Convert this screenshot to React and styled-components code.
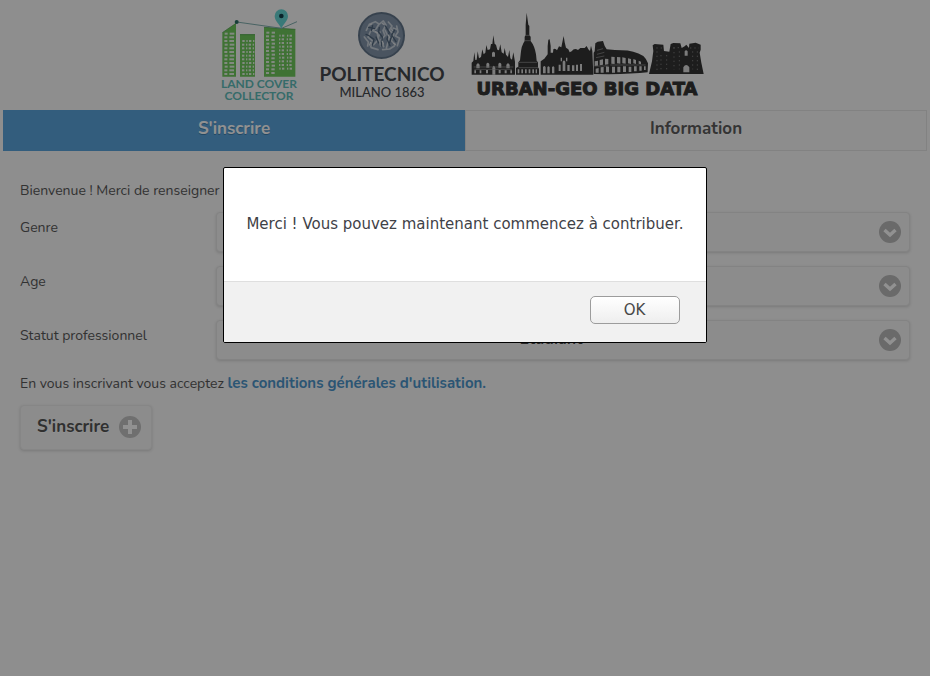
import React from "react";
import styled, { createGlobalStyle } from "styled-components";

const Global = createGlobalStyle`
  *, *::before, *::after { box-sizing: border-box; }
  body {
    margin: 0;
    min-height: 100vh;
    background: #f9f9f9;
    color: #585858;
    font: 14px/20px Nunito, "Noto Sans", sans-serif;
  }
`;

const Header = styled.header`
  display: flex;
  justify-content: center;
  gap: 12px;
  height: 110px;
`;

const Logo = styled.svg`
  display: block;
  flex: none;
  height: 110px;
`;

const Tabs = styled.nav`
  display: grid;
  grid-template-columns: 1fr 1fr;
  margin: 0 3px;
`;

const Tab = styled.button`
  height: 41px;
  padding: 0 0 3px;
  border: 1px solid ${(p) => (p.$active ? "#5aa4dc" : "#e4e4e4")};
  background: ${(p) => (p.$active ? "#5aa4dc" : "#f8f8f8")};
  color: ${(p) => (p.$active ? "#ffffff" : "#5c5c5c")};
  text-shadow: 0 1px 0 ${(p) => (p.$active ? "#3d7eae" : "#ffffff")};
  font: 700 17px/20px Nunito, "Noto Sans", sans-serif;
`;

const Form = styled.form`
  display: flex;
  flex-direction: column;
  padding: 30px 20px;
`;

const Intro = styled.p`
  margin: 0 0 11px;
`;

const Field = styled.div`
  display: grid;
  grid-template-columns: 22% 1fr;
  align-items: start;
  margin-bottom: 14px;
`;

const Label = styled.label`
  padding-top: 6px;
`;

const SelectBox = styled.div`
  display: grid;
  align-items: center;
  border: 1px solid #e6e6e6;
  border-radius: 4px;
  background: #f7f7f7;
  box-shadow: 0 1px 3px rgba(0, 0, 0, 0.14);

  & > * {
    grid-area: 1 / 1;
  }

  & > svg {
    justify-self: end;
    margin-right: 8px;
    pointer-events: none;
  }
`;

const Select = styled.select`
  width: 100%;
  height: 38px;
  padding: 0 40px 2px 16px;
  border: 0;
  appearance: none;
  background: transparent;
  color: #444444;
  font: 700 16px/20px Nunito, "Noto Sans", sans-serif;
  text-align: center;
  text-align-last: center;
`;

const Terms = styled.p`
  margin: -1px 0 11px;
`;

const TermsLink = styled.a`
  color: #4c96cc;
  font-size: 15px;
  font-weight: 700;
  text-decoration: none;
`;

const SubmitButton = styled.button`
  display: flex;
  align-items: center;
  align-self: flex-start;
  gap: 10px;
  height: 45px;
  padding: 0 10px 2px 16px;
  border: 1px solid #ececec;
  border-radius: 4px;
  background: #f6f6f6;
  color: #555555;
  box-shadow: 0 1px 3px rgba(0, 0, 0, 0.15);
  text-shadow: 0 1px 0 #ffffff;
  font: 700 17px/20px Nunito, "Noto Sans", sans-serif;
`;

const Backdrop = styled.div`
  position: fixed;
  inset: 0;
  display: flex;
  align-items: flex-start;
  justify-content: center;
  padding: 167px 16px 16px;
  background: rgba(0, 0, 0, 0.43);
`;

const Dialog = styled.section`
  overflow: hidden;
  border: 1px solid #000000;
  border-radius: 2px;
  background: #ffffff;
  color: #3f4247;
  font: 15px/20px "DejaVu Sans", sans-serif;
`;

const Message = styled.p`
  margin: 0;
  padding: 46px 22px 47px;
`;

const DialogFooter = styled.footer`
  display: flex;
  justify-content: flex-end;
  padding: 14px 26px 18px;
  border-top: 1px solid #dfdfdf;
  background: #f1f1f1;
`;

const OkButton = styled.button`
  width: 90px;
  height: 28px;
  padding: 0;
  border: 1px solid #9c9c9c;
  border-radius: 5px;
  background: linear-gradient(#ffffff, #eeeeee);
  color: #484848;
  font: 15px/20px "DejaVu Sans", sans-serif;
`;

function Windows({ columns, top, bottom, step }) {
  const rows = [];
  for (let y = top; y < bottom; y += step) rows.push(y);
  return rows.map((y, i) =>
    columns.map(([x, w]) => (
      <rect key={`${x}-${y}`} x={x + (i % 3 === 0 ? 1 : 0)} y={y} width={w} height="6" fill="#e4f2e2" />
    ))
  );
}

function LandCoverLogo() {
  return (
    <Logo width="84" viewBox="218 0 84 110" role="img" aria-label="Land Cover Collector">
      <g transform="translate(210 0) scale(.33333)">
        <path fill="#6fc95c" d="M37 98L78 70V230H37zM90 103H135V230H90zM162 82L256 88V230H162z" />
        <path stroke="#4a9a4a" strokeWidth="2" fill="none" d="M37 98L78 70M90 104H135M162 82L256 88" />
        <Windows columns={[[43, 9], [58, 14]]} top={98} bottom={222} step={11} />
        <Windows columns={[[96, 7], [108, 4], [116, 7], [128, 4]]} top={120} bottom={222} step={11} />
        <Windows columns={[[168, 9], [184, 10]]} top={95} bottom={222} step={11} />
        <Windows columns={[[207, 4], [215, 7], [230, 4], [238, 7]]} top={104} bottom={210} step={11} />
        <path fill="none" stroke="#80aeae" strokeWidth="3" d="M80 66L215 85L261 65" />
        <circle cx="80" cy="66" r="6" fill="#2c6f65" />
        <path fill="#65d5d4" d="M214 86C209 72 194 63 194 48A20 20 0 0 1 234 48C234 63 219 72 214 86z" />
        <circle cx="214" cy="48" r="7" fill="#123f4b" />
      </g>
      <g fill="#60bdba" fontFamily="Lato, sans-serif" fontWeight="700" fontSize="12" textAnchor="middle">
        <text x="259" y="88">LAND COVER</text>
        <text x="259" y="100">COLLECTOR</text>
      </g>
    </Logo>
  );
}

function PolitecnicoLogo() {
  return (
    <Logo width="140" viewBox="314 0 140 110" role="img" aria-label="Politecnico Milano 1863">
      <circle cx="381.5" cy="35.5" r="22.5" fill="#8395aa" stroke="#62758a" strokeWidth="2" />
      <g transform="translate(310 0) scale(.33333)" fill="none" strokeLinecap="round" strokeLinejoin="round">
        <path stroke="#c8d1da" strokeWidth="5" d="M169 91l9-18 18-8 11 7-8 14-17 7-8 18 14 12-6 17M189 92l13 7 3 20-14 15M207 73l13-10 8 12-9 16 6 16-12 12 8 21M235 66l11 12-8 13 14 11-8 20 12 12M260 78l4 18-8 12 13 7-7 22M163 111l12 15-2 12M184 143l20 6M218 149l21-2 14-9M210 96l-5 18 7 24M225 90l12 26-8 29M249 84l14 5" />
        <path stroke="#50657b" strokeWidth="4" d="M176 82l18 4M188 77l-4 15M180 110l12 8-5 17M208 82l-2 14 11 15-3 27M226 78l12 19-7 20 9 20M254 90l-9 15 13 20M168 103l9 4M198 111l8 18M244 111l-5 17" />
        <path stroke="#e0e4e8" strokeWidth="4" d="M180 75l5-3M218 71l4 2M245 87l2 4M197 95l5 4M182 127l-3 8M217 124l3 8M235 105l4 8M251 130l4 3" />
      </g>
      <g fill="#44474c" fontFamily="Lato, sans-serif" textAnchor="middle">
        <text x="382" y="81" fontSize="19" fontWeight="700">POLITECNICO</text>
        <text x="382" y="97" fontSize="13" fontWeight="500">MILANO 1863</text>
      </g>
    </Logo>
  );
}

function UrbanLogo() {
  return (
    <Logo width="246" viewBox="466 0 246 110" role="img" aria-label="Urban-Geo Big Data">
      <g transform="translate(460 0) scale(.33333)" fill="#343434">
        <path d="M35 224V188L40 183 43 157 46 180 50 179 53 154 57 175 63 171 67 148 71 163 76 158 79 135 83 150 90 148 93 132 97 132 100 106 104 132 108 134 112 149 117 151 121 133 125 157 131 161 134 144 138 164 144 171 148 150 151 175 156 179 160 157 165 185V224z" />
        <path d="M168 224V204L175 200V187L180 181 182 163Q184 136 194 123V110L197 106V74L200 38 205 74 208 78V106L212 110V123Q224 138 228 163L230 182 234 187V202L237 206V224z" />
        <path d="M242 224V184L253 176 263 163V138L265 119 269 118 272 138V158L279 158 280 148Q284 144 288 148L291 151 297 139 304 142 309 117 311 108 314 127 318 143 325 148 329 157 335 154Q343 142 354 150L361 144 374 144 380 138 385 148 390 153 393 137 397 153 400 224z" />
        <path d="M401 220V158L404 154 406 130 413 125 429 123 434 138 440 148Q467 151 485 151 522 151 550 168 560 177 564 190L563 217Q507 224 401 222z" />
        <path d="M567 222L576 184 580 153 578 136 584 132 610 134 612 153 628 155 632 132 640 129 661 130 665 144 674 139 679 134 687 144 688 131 707 128 722 134 722 149 719 158 724 188 731 222z" />
        <g fill="#dadada">
          <path d="M97 224V204Q101 190 106 204V224zM79 203v-11q4-8 9 0v11zM115 203v-11q4-8 9 0v11zM49 205v-11l5-5 5 5v11zM139 205v-11l5-5 5 5v11zM96 170v-11q5-8 9 0v11zM43 220v-9h5v9zM59 220v-9h5v9zM78 220v-10h6v10zM116 220v-10h6v10zM134 220v-9h6v9zM151 220v-9h5v9z" />
          <path d="M173 220v-12h5v12zM184 220v-12h5v12zM195 220v-12h5v12zM206 220v-12h5v12zM217 220v-12h5v12zM227 220v-12h4v12z" />
          <path d="M249 220v-18q4-8 8 0v18zM262 220v-18q3-7 7 0v18zM276 220v-18q4-7 7 0v18zM296 213v-19h6v19zM308 213v-28q4-7 8 0v28zM322 213v-18h7v18zM336 213v-17h7v17zM348 213v-19h6v19zM360 213v-21h6v21zM302 184v-11h4v11zM318 184v-11h4v11z" />
          <path d="M404 184l10-2v15l-10 1zM419 180l10-2v16l-10 2zM435 176l10 1v16l-10 1zM407 206l9-2v14h-9zM422 202l9-1v17h-9zM438 199l9 1v17h-9zM454 170l10 1v21l-10-1zM471 171l10 1v19l-10-1zM487 172l10 2v17l-10-1zM504 175l9 2v15l-9-2zM520 177l8 3v12l-8-2zM536 182l7 3v8l-7-2zM456 200h9v18h-9zM472 200h9v17h-9zM489 199h9v17h-9zM506 200h8v16h-8zM522 199h8v15h-8zM538 199h7v13h-7zM552 199h5v11h-5z" />
          <path d="M670 217v-15q8-14 18 0v15zM674 167v-13q4-6 9 0v13z" />
        </g>
        <g stroke="#9b9b9b" strokeWidth="2">
          <path d="M177 187h55M176 203h58M193 122h20M196 106h14M41 201h119M43 208h113M403 198h43M451 195h106M411 151l18-5M411 163l22-6M408 173l25-5" />
          <path strokeDasharray="4 9" d="M591 154v58M603 165v48M620 165v47M642 143v66M658 154v54M698 154v54M712 154v57M589 144h24M640 143h20M690 144h27" />
        </g>
      </g>
      <text x="587" y="95" textAnchor="middle" fontFamily="DejaVu Sans, sans-serif" fontWeight="700" fontSize="18" fill="#343434" stroke="#343434">
        URBAN-GEO BIG DATA
      </text>
    </Logo>
  );
}

function CircleIcon({ kind }) {
  const plus = kind === "plus";
  return (
    <svg width="22" height="22" viewBox="0 0 22 22" aria-hidden="true">
      <circle cx="11" cy="11" r="11" fill={plus ? "#c3c3c3" : "#bababa"} />
      <path
        d={plus ? "M11 4v14M4 11h14" : "M5.5 9l5.5 5 5.5-5"}
        fill="none"
        stroke="#ffffff"
        strokeWidth={plus ? 4 : 3.4}
      />
    </svg>
  );
}

const fields = [
  { id: "gender", label: "Genre", options: ["Femme", "Homme"] },
  { id: "age", label: "Age", options: ["18-24", "25-34", "35-44"] },
  { id: "status", label: "Statut professionnel", options: ["Étudiant", "Employé"] },
];

export default function App() {
  return (
    <>
      <Global />
      <Header>
        <LandCoverLogo />
        <PolitecnicoLogo />
        <UrbanLogo />
      </Header>
      <Tabs>
        <Tab type="button" $active>S'inscrire</Tab>
        <Tab type="button">Information</Tab>
      </Tabs>
      <Form>
        <Intro>Bienvenue ! Merci de renseigner les informations suivantes :</Intro>
        {fields.map((f) => (
          <Field key={f.id}>
            <Label htmlFor={f.id}>{f.label}</Label>
            <SelectBox>
              <Select id={f.id}>
                {f.options.map((o) => (
                  <option key={o}>{o}</option>
                ))}
              </Select>
              <CircleIcon kind="chevron" />
            </SelectBox>
          </Field>
        ))}
        <Terms>
          En vous inscrivant vous acceptez{" "}
          <TermsLink href="#terms">les conditions générales d'utilisation.</TermsLink>
        </Terms>
        <SubmitButton type="button">
          S'inscrire
          <CircleIcon kind="plus" />
        </SubmitButton>
      </Form>
      <Backdrop>
        <Dialog role="alertdialog" aria-modal="true" aria-describedby="message">
          <Message id="message">Merci ! Vous pouvez maintenant commencez à contribuer.</Message>
          <DialogFooter>
            <OkButton type="button">OK</OkButton>
          </DialogFooter>
        </Dialog>
      </Backdrop>
    </>
  );
}
